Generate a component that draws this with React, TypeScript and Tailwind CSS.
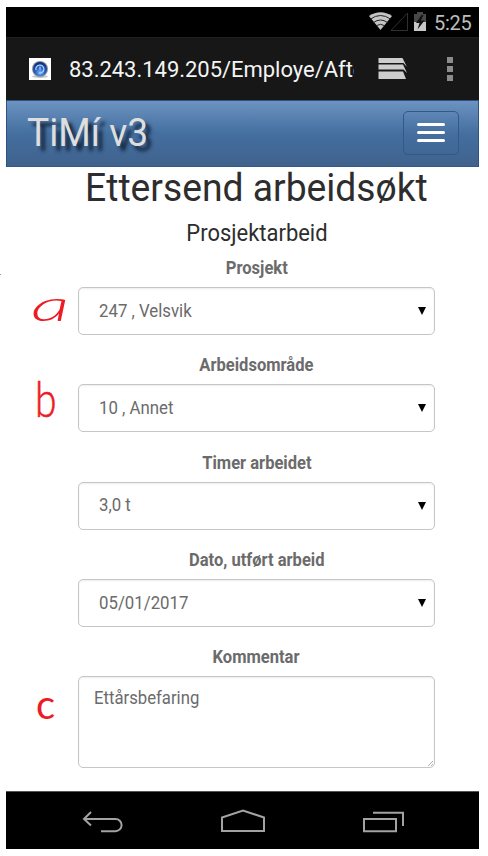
const fields = [
  { label: 'Prosjekt', value: '247 , Velsvik' },
  { label: 'Arbeidsområde', value: '10 , Annet' },
  { label: 'Timer arbeidet', value: '3,0 t' },
  { label: 'Dato, utført arbeid', value: '05/01/2017' },
];

function StatusBar() {
  return (
    <div className="flex h-[30px] items-center bg-black pl-[363px] text-[#bdbdbd]">
      <svg className="h-[20px] w-[64px] shrink-0" viewBox="369 12 64 20">
        <path d="M369 16Q380.500 8.500 392 16L380.500 30Z" fill="#c4c4c4" />
        <path d="M370.500 19Q380.500 12 390.500 19M373.500 22.500Q380.500 17.500 387.500 22.500M376 25.800Q380.500 22.800 385 25.800" fill="none" stroke="#222" strokeWidth="1" />
        <path d="M391 30.500L407.500 13V30.500Z" fill="none" stroke="#303030" />
        <path d="M414 14h3v-2h6v2h3v8h-12z" fill="#484848" />
        <path d="M414 22h12v9h-12z" fill="#c8c8c8" />
        <path d="M421.500 15L416 23H419.500L417.500 29.500L424.500 20.500H420.800L423.500 15Z" fill="#111" />
      </svg>
      <span className="relative top-px ml-px text-[20px] leading-none tracking-[-0.3px]">5:25</span>
    </div>
  );
}

function AddressBar() {
  return (
    <div className="flex h-[63px] items-center border-t border-[#202020] bg-[#171717] pl-[23px]">
      <svg className="h-[22px] w-[22px] shrink-0" viewBox="0 0 22 22">
        <defs>
          <radialGradient id="orb" cx=".5" cy=".75" r=".7">
            <stop offset="0" stopColor="#75b7fb" />
            <stop offset=".5" stopColor="#285fc0" />
            <stop offset="1" stopColor="#102a72" />
          </radialGradient>
        </defs>
        <path d="M0 0h22v22H0z" fill="#fff" />
        <ellipse cx="11" cy="18.500" rx="8" ry="1.500" fill="#c8c8c8" />
        <circle cx="11" cy="11" r="8" fill="#8b929d" />
        <circle cx="11" cy="11" r="7" fill="url(#orb)" />
        <path d="M7 12a4 4 0 1 1 3 3M11 8.500v3" fill="none" stroke="#a9d0ff" strokeWidth="1.300" />
      </svg>
      <span className="relative top-px ml-[18px] w-[285px] shrink-0 overflow-hidden whitespace-nowrap text-[22px] leading-[30px] tracking-[-0.03px] text-[#f4f4f4]">
        83.243.149.205/Employe/After
      </span>
      <svg className="ml-[24px] h-[24px] w-[30px] shrink-0" viewBox="378 58 30 24" fill="#cdcdcd">
        <path d="M378.500 59H402.500L407 68L403.500 64H378.500Z" />
        <path d="M378.500 65.500H403L407 74L403.500 70.500H378.500Z" />
        <path d="M378.500 72.500H403L406 80H378.500Z" />
      </svg>
      <div className="ml-[39px] flex flex-col gap-[3px]">
        <i className="size-[6px] bg-[#8c8c8c]" />
        <i className="size-[6px] bg-[#8c8c8c]" />
        <i className="size-[6px] bg-[#8c8c8c]" />
      </div>
    </div>
  );
}

function Navbar() {
  return (
    <header className="flex h-[67px] items-center justify-between border border-[#2c5380] border-b-[#315987] bg-linear-to-b from-[#6c93c2] via-[#446f9f] to-[#40628d] pr-[19px] pb-[2px] pl-[20px]">
      <span className="origin-left scale-x-[.98] text-[38px] leading-none text-[#dedede] [text-shadow:5px_5px_4px_#10233b]">TiMí v3</span>
      <button className="flex h-[44px] w-[56px] flex-col items-center justify-center gap-[5px] rounded-[5px] border border-[#305985]">
        <i className="h-[3px] w-[28px] rounded-full bg-white" />
        <i className="h-[3px] w-[28px] rounded-full bg-white" />
        <i className="h-[3px] w-[28px] rounded-full bg-white" />
      </button>
    </header>
  );
}

function SystemNav() {
  return (
    <nav className="flex h-[58px] items-center border-t border-[#555] bg-black">
      <svg className="h-[57px] w-[473px]" viewBox="6 792 473 57" fill="none" stroke="#a3a3a3" strokeWidth="2">
        <path d="M91 812L84 819L91 825.500M84 819H115.500A6 6 0 0 1 115.500 831.200H101" />
        <path d="M222 831V817.500L243 810.500L264 817.500V831Z" />
        <path d="M364 819H396V831.200H364ZM373 812.800H403V826" />
      </svg>
    </nav>
  );
}

export default function App() {
  return (
    <div className="relative h-[856px] w-[488px] overflow-hidden bg-white pt-[7px] pl-[6px] font-['Roboto',sans-serif]">
      <div className="flex h-[842px] w-[473px] flex-col">
        <StatusBar />
        <AddressBar />
        <Navbar />
        <main className="flex flex-1 flex-col pl-[72px]">
          <div className="flex w-[357px] flex-col items-center text-[#6b6b6b]">
            <h1 className="h-[49px] scale-x-[.955] whitespace-nowrap text-[39px] leading-[42px] text-[#2d2d2d]">Ettersend arbeidsøkt</h1>
            <h2 className="h-[39px] scale-x-[.955] text-[23px] leading-[36px] text-[#2d2d2d]">Prosjektarbeid</h2>
            {fields.map((f) => (
              <label key={f.label} className="flex h-[97.250px] w-full flex-col items-center">
                <span className="h-[32px] scale-x-[.945] text-[17.500px] leading-[26px] font-bold">{f.label}</span>
                <span className="flex h-[48px] w-full items-center justify-between rounded-[5px] border border-[#c6c6c6] pr-[8px] pl-[20px] text-[17.500px] shadow-[inset_0_1px_2px_#00000014]">
                  <span className="origin-left scale-x-[.96]">{f.value}</span>
                  <svg className="h-[8px] w-[8px]" viewBox="0 0 8 8"><path d="M0 0h8L4 8z" /></svg>
                </span>
              </label>
            ))}
            <label className="flex w-full flex-col items-center">
              <span className="h-[32px] scale-x-[.945] text-[17.500px] leading-[26px] font-bold">Kommentar</span>
              <span className="flex h-[92px] w-full justify-between rounded-[5px] border border-[#c6c6c6] pt-[9px] pl-[15px] text-[17.500px] leading-[24px] shadow-[inset_0_1px_2px_#00000014]">
                <span className="origin-left scale-x-[.955]">Ettårsbefaring</span>
                <svg className="h-[7px] w-[7px] self-end" viewBox="0 0 7 7" stroke="#999" strokeWidth=".8"><path d="M1 6L6 1M4 6L6 4" /></svg>
              </span>
            </label>
          </div>
        </main>
        <SystemNav />
      </div>
      <i className="absolute top-[274px] left-0 h-px w-px bg-[#999]" />
      <span className="absolute top-[279px] left-[31px] origin-left scale-x-[1.750] font-['Lato',sans-serif] text-[44px] leading-[50px] font-light text-[#ed1c24] italic">a</span>
      <span className="absolute top-[373px] left-[35px] origin-left scale-x-[.78] font-['Lato',sans-serif] text-[50px] leading-[50px] font-light text-[#ed1c24] [-webkit-text-stroke:0.7px_#ed1c24]">b</span>
      <span className="absolute top-[679px] left-[36px] font-['Lato',sans-serif] text-[40px] leading-[50px] text-[#ed1c24]">c</span>
    </div>
  );
}
